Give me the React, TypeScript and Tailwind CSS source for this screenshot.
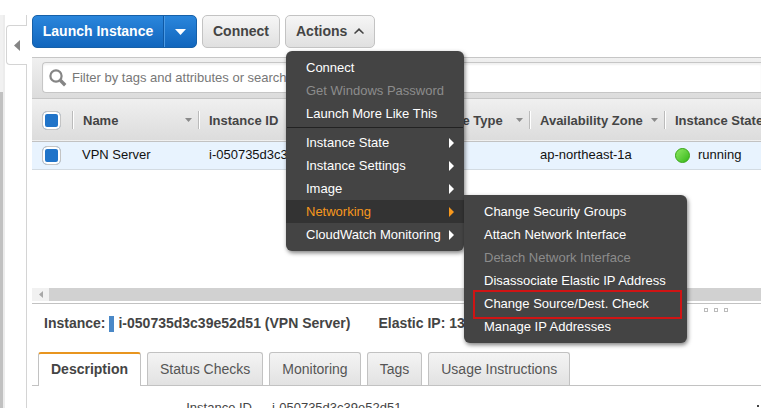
import { ReactNode } from 'react';
import clsx from 'clsx';

interface MenuEntry {
  label: string;
  disabled?: boolean;
  submenu?: boolean;
  active?: boolean;
  highlighted?: boolean;
}

const instanceActions: MenuEntry[] = [
  { label: 'Connect' },
  { label: 'Get Windows Password', disabled: true },
  { label: 'Launch More Like This' },
];

const instanceMenus: MenuEntry[] = [
  { label: 'Instance State', submenu: true },
  { label: 'Instance Settings', submenu: true },
  { label: 'Image', submenu: true },
  { label: 'Networking', submenu: true, active: true },
  { label: 'CloudWatch Monitoring', submenu: true },
];

const networkingActions: MenuEntry[] = [
  { label: 'Change Security Groups' },
  { label: 'Attach Network Interface' },
  { label: 'Detach Network Interface', disabled: true },
  { label: 'Disassociate Elastic IP Address' },
  { label: 'Change Source/Dest. Check', highlighted: true },
  { label: 'Manage IP Addresses' },
];

const tabs = ['Description', 'Status Checks', 'Monitoring', 'Tags', 'Usage Instructions'];

function MenuItem({ item, children }: { item: MenuEntry; children?: ReactNode }) {
  return (
    <li className="relative">
      <button
        type="button"
        disabled={item.disabled}
        className={clsx(
          'flex h-[23px] w-full items-center justify-between pl-5 pr-[10px] text-left whitespace-nowrap',
          item.disabled ? 'text-[#8c8c8c]' : item.active ? 'bg-[#333] text-[#f7981d]' : 'text-white',
        )}
      >
        {item.label}
        {item.submenu && (
          <svg viewBox="0 0 5 10" className="h-[10px] w-[5px] shrink-0 fill-current">
            <path d="M0 0L5 5L0 10Z" />
          </svg>
        )}
      </button>
      {item.highlighted && (
        <span className="pointer-events-none absolute -top-[2px] -bottom-1 left-[9px] right-[5px] border-2 border-[#d01414]" />
      )}
      {children}
    </li>
  );
}

function ActionsMenu() {
  return (
    <div className="absolute left-px top-9 z-10 w-[178px] rounded-md bg-[#444] py-[5px] text-[13px] font-normal shadow-[1px_2px_4px_rgba(0,0,0,0.5)]">
      <ul>
        {instanceActions.map((item) => (
          <MenuItem key={item.label} item={item} />
        ))}
      </ul>
      <hr className="mx-px mt-[2px] mb-[3px] border-[#222]" />
      <ul>
        {instanceMenus.map((item) => (
          <MenuItem key={item.label} item={item}>
            {item.active && (
              <ul className="absolute left-full -top-[5px] w-[223px] rounded-md rounded-tl-none bg-[#444] py-[5px] shadow-[1px_2px_4px_rgba(0,0,0,0.5)]">
                {networkingActions.map((sub) => (
                  <MenuItem key={sub.label} item={sub} />
                ))}
              </ul>
            )}
          </MenuItem>
        ))}
      </ul>
    </div>
  );
}

function Checkbox({ label }: { label: string }) {
  return (
    <input
      type="checkbox"
      defaultChecked
      aria-label={label}
      className="ml-[10px] block h-[19px] w-[19px] appearance-none rounded-[5px] border border-[#c4c4c4] bg-[#fff] checked:bg-[#2074c9] shadow-[inset_0_0_0_2px_#fff]"
    />
  );
}

function HeaderCell({ label, sortable = true }: { label: string; sortable?: boolean }) {
  return (
    <th className="p-0 pt-px text-left font-bold">
      <div className="flex h-[18px] items-center justify-between border-l border-[#bbb] pl-[10px] pr-[6px] shadow-[inset_1px_0_0_#fff]">
        <span className="whitespace-nowrap">{label}</span>
        {sortable && (
          <svg viewBox="0 0 7 4" className="h-1 w-[7px] shrink-0 fill-[#8a8a8a]">
            <path d="M0 0H7L3.5 4Z" />
          </svg>
        )}
      </div>
    </th>
  );
}

function InstanceTable() {
  return (
    <table className="w-full table-fixed border-collapse text-[13px]">
      <colgroup>
        <col className="w-10" />
        <col className="w-[126px]" />
        <col className="w-[208px]" />
        <col className="w-[123px]" />
        <col className="w-[135px]" />
        <col />
      </colgroup>
      <thead>
        <tr className="h-[42px] border-b border-[#c2c2c2] bg-linear-to-b from-[#f0f0f0] to-[#dcdcdc] text-[#444]">
          <th className="p-0 pt-px">
            <Checkbox label="Select all instances" />
          </th>
          <HeaderCell label="Name" />
          <HeaderCell label="Instance ID" />
          <HeaderCell label="Instance Type" />
          <HeaderCell label="Availability Zone" />
          <HeaderCell label="Instance State" sortable={false} />
        </tr>
      </thead>
      <tbody>
        <tr className="h-7 border-b border-[#d3dbe2] bg-[#e8f3fe] text-[#111]">
          <td className="p-0">
            <Checkbox label="Select VPN Server" />
          </td>
          <td className="p-0 pl-[10px]">VPN Server</td>
          <td className="p-0 pl-[11px]">i-050735d3c39e52d51</td>
          <td className="p-0" />
          <td className="p-0 pl-[11px]">ap-northeast-1a</td>
          <td className="p-0 pl-[11px]">
            <span className="flex items-center gap-2">
              <span className="h-[15px] w-[15px] rounded-full border border-[#3aa61a] bg-linear-to-br from-[#8be860] to-[#2fb80c]" />
              running
            </span>
          </td>
        </tr>
      </tbody>
    </table>
  );
}

function Toolbar() {
  const grayButton =
    'flex h-[33px] items-center rounded-[5px] border border-[#c3c3c3] bg-linear-to-b from-[#f6f6f6] to-[#e0e0e0] px-[10px] text-[#444]';

  return (
    <div className="flex gap-[5px] pt-[15px] pb-[9px] text-[14px] font-bold">
      <div className="flex h-[33px] overflow-hidden rounded-[5px] border border-[#1660a8] bg-linear-to-b from-[#2a86dc] to-[#1166bd] text-white">
        <button type="button" className="w-[131px] border-r border-[#0f59a5] text-center whitespace-nowrap">
          Launch Instance
        </button>
        <button
          type="button"
          aria-label="More launch options"
          className="flex w-8 items-center justify-center border-l border-[#4b9ae4]"
        >
          <svg viewBox="0 0 11 6" className="h-[6px] w-[11px] fill-white">
            <path d="M0 0H11L5.5 6Z" />
          </svg>
        </button>
      </div>
      <button type="button" className={grayButton}>
        Connect
      </button>
      <div className="relative">
        <button type="button" aria-expanded="true" className={clsx(grayButton, 'gap-[7px]')}>
          Actions
          <svg viewBox="0 0 10 6" className="mb-[2px] h-[6px] w-[10px] fill-[#444]">
            <path d="M0 5L5 0L10 5L9 6L5 2.5L1 6Z" />
          </svg>
        </button>
        <ActionsMenu />
      </div>
    </div>
  );
}

function FilterBar() {
  return (
    <div className="border-y border-[#c6c6c6] bg-linear-to-b from-[#f0f0f0] to-[#dcdcdc] pt-1 pb-[5px] pl-[10px]">
      <label className="flex h-[31px] items-center gap-[5px] rounded-l-[4px] border border-r-0 border-[#c6c6c6] bg-white pl-[6px] shadow-[inset_0_2px_2px_rgba(0,0,0,0.06)]">
        <svg viewBox="0 0 18 18" className="h-[18px] w-[18px] shrink-0" fill="none" stroke="#858585">
          <circle cx="7" cy="7" r="5.6" strokeWidth="2.2" />
          <path d="M11.3 11.3L16.2 16.2" strokeWidth="3.4" />
        </svg>
        <input
          type="text"
          aria-label="Filter instances"
          placeholder="Filter by tags and attributes or search by keyword"
          className="min-w-0 flex-1 bg-transparent text-[13px] text-[#444] outline-none placeholder:text-[#777]"
        />
      </label>
    </div>
  );
}

function DetailPanel() {
  return (
    <section className="h-[105px] shrink-0 overflow-hidden border-t border-[#c2c2c2]">
      <div className="flex h-12 items-center pb-[9px] pl-3 text-[14px] font-bold whitespace-nowrap text-[#444]">
        <span>Instance:</span>
        <span className="mx-1 h-4 w-[5px] bg-[#4a88c7]" />
        <span>i-050735d3c39e52d51 (VPN Server)</span>
        <span className="ml-7">Elastic IP: 13</span>
        <span className="ml-auto flex gap-[6px] self-start pt-1 pr-[33px]">
          <i className="h-1 w-1 border border-[#bbb]" />
          <i className="h-1 w-1 border border-[#bbb]" />
          <i className="h-1 w-1 border border-[#bbb]" />
        </span>
      </div>
      <div role="tablist" className="flex gap-[6px] border-b border-[#c2c2c2] pl-[6px] text-[14px] whitespace-nowrap">
        {tabs.map((tab, i) => (
          <button
            key={tab}
            type="button"
            role="tab"
            aria-selected={i === 0}
            className={clsx(
              'h-[33px] rounded-t-[3px] border border-b-0 border-[#c2c2c2] px-3',
              i === 0
                ? '-mb-px h-[34px] border-t-2 border-t-[#e8951f] bg-white pb-[2px] font-bold text-[#444]'
                : 'bg-linear-to-b from-[#f4f4f4] to-[#e2e2e2] text-[#555]',
            )}
          >
            {tab}
          </button>
        ))}
      </div>
      <dl className="flex gap-5 pt-3 text-[13px] leading-5 text-[#444]">
        <dt className="w-[220px] text-right">Instance ID</dt>
        <dd>i-050735d3c39e52d51</dd>
        <dd aria-hidden="true" className="mt-[7px] mr-[2px] ml-auto h-[2px] w-[2px] bg-[#444]" />
      </dl>
    </section>
  );
}

export default function App() {
  return (
    <div className="flex h-screen overflow-hidden bg-white font-['Liberation_Sans',Arial,sans-serif]">
      <aside className="flex w-[27px] shrink-0 pt-[15px]">
        <div className="flex w-[5px] flex-col border-r-2 border-[#ececec] bg-[#c1c1c1]">
          <div className="h-[77px] bg-[#f1f1f1]" />
        </div>
        <div className="flex flex-1 flex-col pl-px">
          <div className="h-[10px] border-r border-[#d4d4d4]" />
          <button
            type="button"
            aria-label="Collapse navigation"
            className="flex h-10 items-center justify-center rounded-l-[4px] border border-r-0 border-[#d4d4d4] bg-white"
          >
            <svg viewBox="0 0 6 11" className="h-[11px] w-[6px] fill-[#858585]">
              <path d="M6 0V11L0 5.5Z" />
            </svg>
          </button>
          <div className="flex-1 border-r border-[#d4d4d4]" />
        </div>
      </aside>

      <main className="ml-[5px] flex min-w-0 flex-1 flex-col">
        <Toolbar />
        <FilterBar />
        <div className="flex-1 overflow-hidden">
          <InstanceTable />
        </div>
        <div className="mb-[2px] flex h-[13px] shrink-0 bg-[#d1d1d1]">
          <button
            type="button"
            aria-label="Scroll left"
            className="flex w-[17px] items-center justify-center bg-[#f1f1f1]"
          >
            <svg viewBox="0 0 4 7" className="h-[7px] w-1 fill-[#a8a8a8]">
              <path d="M4 0V7L0 3.5Z" />
            </svg>
          </button>
        </div>
        <DetailPanel />
      </main>
    </div>
  );
}
